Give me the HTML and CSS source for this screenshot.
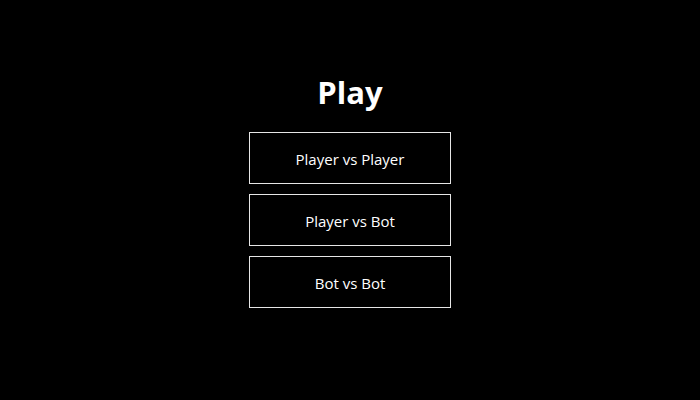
FILE: index.html
```html
<!DOCTYPE html>
<html>
<head>
<meta charset="utf-8">
<link rel="stylesheet" href="styles.css">
</head>
<body>
<main class="menu">
  <h1 class="title">Play</h1>
  <button class="option">Player vs Player</button>
  <button class="option">Player vs Bot</button>
  <button class="option">Bot vs Bot</button>
</main>
</body>
</html>
```
FILE: styles.css
```css
html, body {
  margin: 0;
  height: 100%;
  background: #000;
}
body {
  font-family: "Open Sans", "Noto Sans", sans-serif;
  color: #fff;
}
.menu {
  display: flex;
  flex-direction: column;
  align-items: center;
  gap: 10px;
  padding-top: 70px;
}
.title {
  margin: 0 0 8px;
  font-size: 31px;
  line-height: 44px;
  font-weight: 700;
}
.option {
  box-sizing: border-box;
  width: 202px;
  height: 52px;
  background: #000;
  color: #fff;
  border: 1px solid #e6e6e6;
  font-family: inherit;
  font-size: 15px;
  padding: 2px 0 0;
}
```
